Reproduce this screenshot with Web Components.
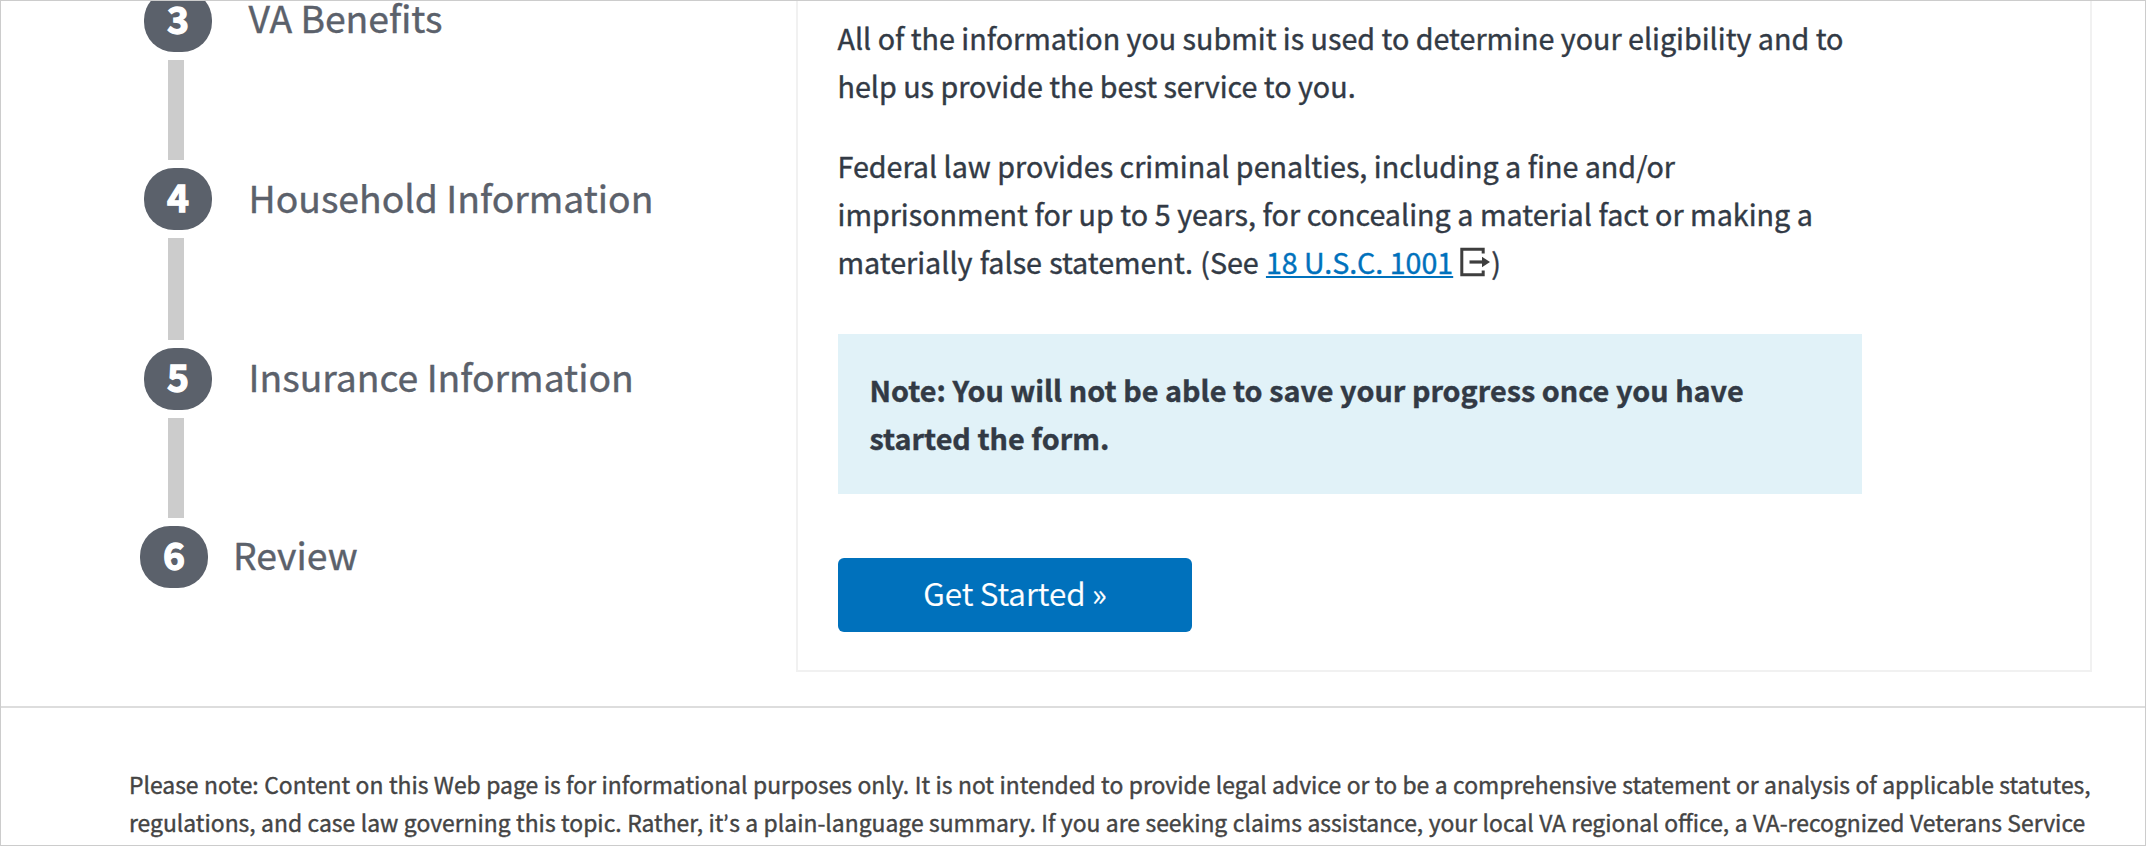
<!DOCTYPE html>
<html lang="en">
<head>
<meta charset="utf-8">
<title>Health care application</title>
<style>
body{margin:0;background:#fff;color:#323a45;font:28.69px/48px "Noto Sans CJK SC","Open Sans",sans-serif;-webkit-text-stroke:.4px currentColor}
</style>
</head>
<body>
<va-page>
  <va-step slot="steps" n="3" style="--drop:-1px">VA Benefits</va-step>
  <va-step slot="steps" n="4" style="--pitch:180px;--drop:1px">Household Information</va-step>
  <va-step slot="steps" n="5">Insurance Information</va-step>
  <va-step slot="steps" n="6" class="last" style="--pitch:62px;--gap:25px">Review</va-step>
  <va-card slot="card">
    <va-text>All of the information you submit is used to determine your eligibility and to<br>help us provide the best service to you.</va-text>
    <va-text>Federal law provides criminal penalties, including a fine and/or<br><span style="word-spacing:.15px">imprisonment for up to 5 years, for concealing a material fact or making a</span><br><span style="word-spacing:.75px">materially false statement. (See </span><va-link>18 U.S.C. 1001</va-link>)</va-text>
    <va-note>Note: You will not be able to save your progress once you have<br>started the form.</va-note>
    <va-button>Get Started »</va-button>
  </va-card>
  <va-disclaimer slot="footer"><span style="word-spacing:.35px">Please note: Content on this Web page is for informational purposes only. It is not intended to provide legal advice or to be a comprehensive statement or analysis of applicable statutes,</span><br><span style="word-spacing:.32px">regulations, and case law governing this topic. Rather, it<span style="font-family:Lato,sans-serif;line-height:1;letter-spacing:.8px">’</span>s a plain-language summary. If you are seeking claims assistance, your local VA regional office, a VA-recognized Veterans Service</span></va-disclaimer>
</va-page>
<script>
const define = (name, html, setup) => customElements.define(name, class extends HTMLElement {
  connectedCallback() {
    if (this.shadowRoot) return;
    const root = this.attachShadow({ mode: 'open' });
    root.innerHTML = html;
    if (setup) setup(this, root);
  }
});

define('va-page', `<style>
:host{display:block;box-sizing:border-box;width:2146px;height:846px;border:1px solid #ccc;overflow:hidden}
main{display:flex;height:705px;box-sizing:border-box;padding-right:53px}
nav{display:flex;flex-direction:column;justify-content:flex-end;width:795px;height:587px;flex:none}
section{flex:1;height:671px}
footer{border-top:2px solid #ddd}
</style>
<main><nav><slot name="steps"></slot></nav><section><slot name="card"></slot></section></main>
<footer><slot name="footer"></slot></footer>`);

define('va-step', `<style>
:host{display:flex;flex:none;height:var(--pitch,178px);padding-left:143px;gap:var(--gap,36.5px);color:#5b616b;font-size:37.3px;line-height:56px;white-space:nowrap}
:host(.last){padding-left:139px}
.rail{display:flex;flex-direction:column;width:68px;flex:none}
.num{box-sizing:border-box;height:62px;width:68px;flex:none;border-radius:30px;background:#5b616b;color:#fff;font-weight:700;text-align:center;-webkit-text-stroke:1.3px #fff}
.bar{flex:1;width:16px;margin:8px 0 8px 24px;background:#ccc}
:host(.last) .bar{display:none}
.label{margin-top:var(--drop,0px)}
</style>
<div class="rail"><div class="num"></div><div class="bar"></div></div><div class="label"><slot></slot></div>`,
(el, root) => { root.querySelector('.num').textContent = el.getAttribute('n'); });

define('va-card', `<style>
:host{display:flex;flex-direction:column;align-items:flex-start;box-sizing:border-box;height:671px;border:2px solid #f1f1f1;border-top:0;padding:13px 0 0 39.5px;gap:32px}
</style><slot></slot>`);

define('va-text', `<style>:host{display:block;white-space:nowrap}</style><slot></slot>`);

define('va-link', `<style>
:host{display:inline;white-space:nowrap}
a{color:#0071bc;font-size:28.6px;text-decoration:underline;text-decoration-thickness:2px;text-underline-offset:2px;text-decoration-skip-ink:none}
svg{width:31px;height:30px;margin:-10px 0 0 7px;vertical-align:-3px}
</style><a><slot></slot></a><svg viewBox="0 0 31 30" fill="none" stroke="#3e3e3e"><path d="M23.2 6.5V2.2H1.8V27.8H23.2V23.5" stroke-width="3"/><path d="M9.5 15H23" stroke-width="3.2"/><path d="M22 9.8L30 15L22 20.2Z" fill="#3e3e3e" stroke="none"/></svg>`);

define('va-note', `<style>
:host{display:block;box-sizing:border-box;width:1024px;height:160px;margin:16px 0 0 .5px;padding:32px 0 0 31.5px;background:#e1f2f8;font-weight:700;font-size:28.78px;word-spacing:.1px;white-space:nowrap}
</style><slot></slot>`);

define('va-button', `<style>
:host{display:block;margin:32px 0 0 .5px}
button{display:block;box-sizing:border-box;width:354px;height:74px;border:0;border-radius:6px;padding:0;background:#0071bc;color:#fff;font:350 31.5px/68px "Noto Sans CJK SC","Open Sans",sans-serif;word-spacing:-.8px;text-align:center;-webkit-text-stroke:.2px #fff}
span{display:block;height:74px}
</style><button><span><slot></slot></span></button>`);

define('va-disclaimer', `<style>
:host{display:block;padding:57px 0 0 128px;font-size:22.88px;line-height:38px;color:#444;white-space:nowrap}
</style><slot></slot>`);
</script>
</body>
</html>
